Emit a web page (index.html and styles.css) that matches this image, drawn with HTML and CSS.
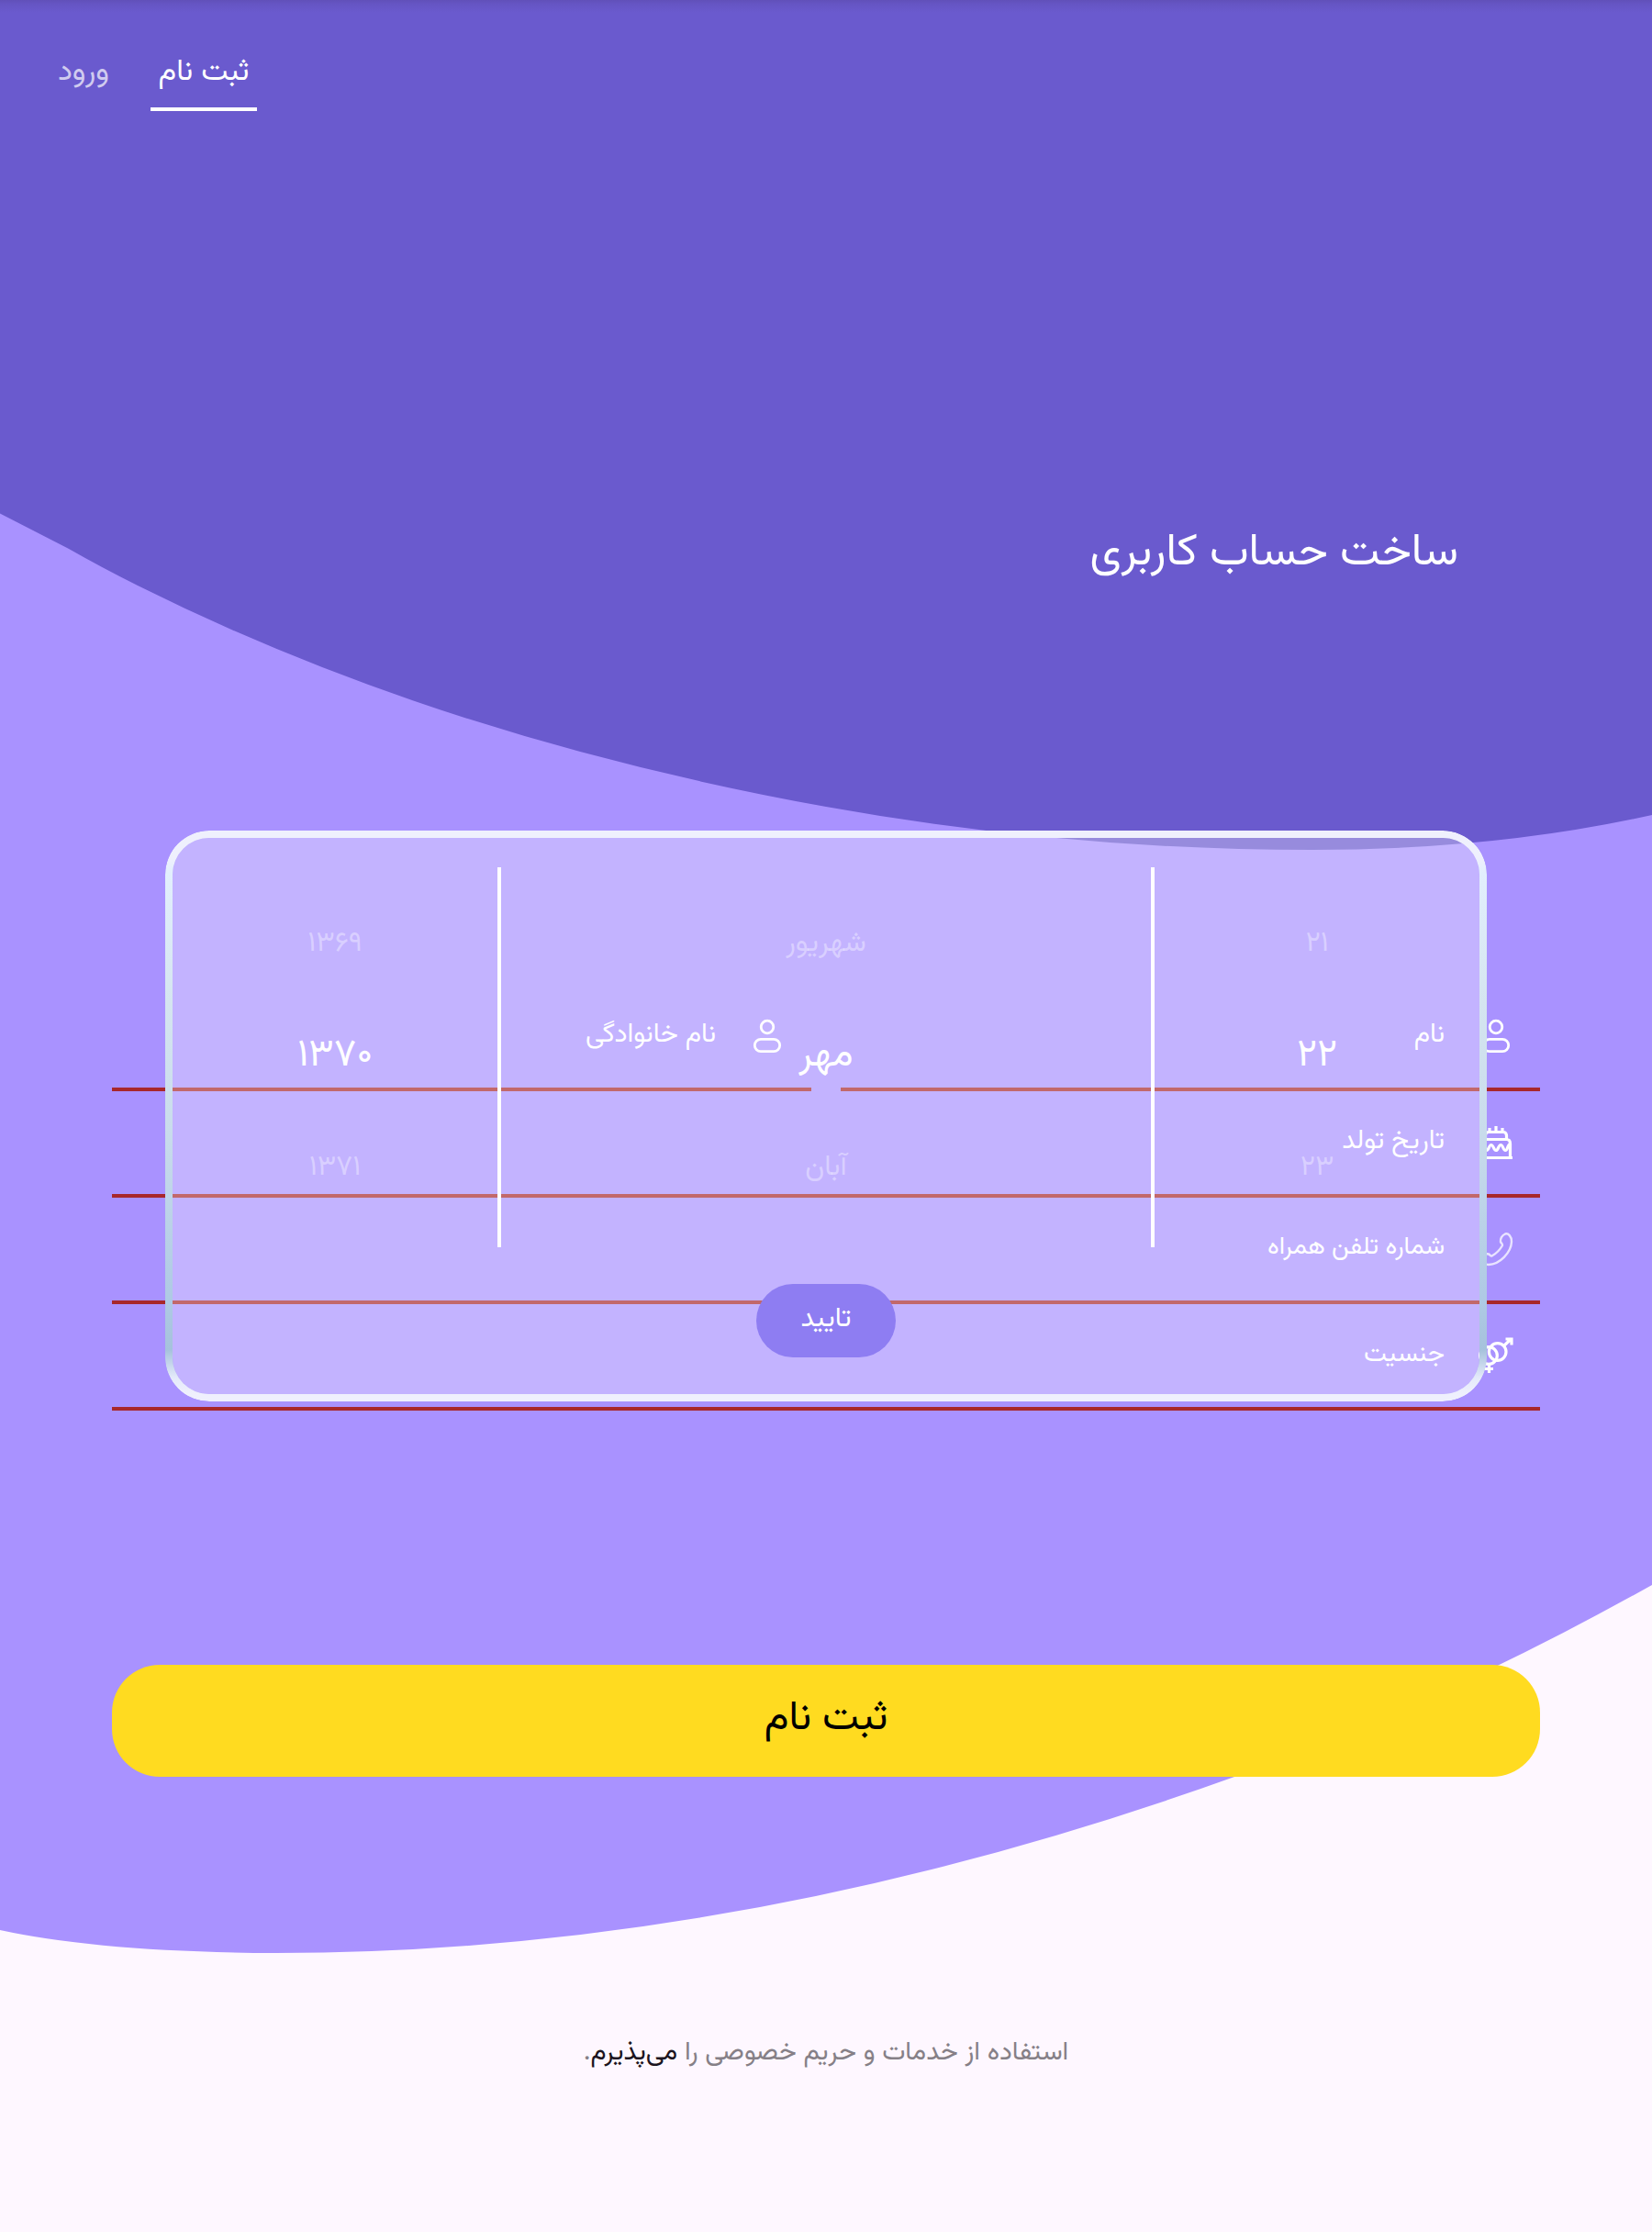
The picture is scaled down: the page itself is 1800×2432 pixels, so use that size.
FILE: index.html
```html
<!DOCTYPE html>
<html lang="fa" dir="rtl">
<head>
<meta charset="utf-8">
<title>ثبت نام</title>
<link rel="stylesheet" href="styles.css">
</head>
<body>
<svg class="waves" viewBox="0 0 1800 2432" aria-hidden="true">
  <path fill="#a992ff" d="M0 0H1800V1727Q1574 1853.600 1345 1936Q812 2128 300 2128Q110 2127 0 2103Z"/>
  <path fill="#6a5ace" d="M0 0H1800V888Q1630 926 1430 926Q1161 926 900 879Q481 803.500 150 638Q110 618 75 598L0 559.500Z"/>
</svg>
<svg width="0" height="0" class="defs" aria-hidden="true">
  <symbol id="person" viewBox="0 0 40 40">
    <circle cx="20" cy="10" r="6.800"/><rect x="6.300" y="23.300" width="27.400" height="13.400" rx="6.700"/>
  </symbol>
  <symbol id="cake" viewBox="0 0 40 40">
    <path d="M2 36.500H38M5 36V20Q5 16.500 8.500 16.500H31.500Q35.500 16.500 35.500 21V36M8.500 16V12Q8.500 8.500 12 8.500H28Q31 8.500 31.500 12V16M13 8V4M20 8V2M27 8V4"/>
    <path d="M5 21.500C7 21.500 7 28.500 9.700 28.500S12.300 22.500 14.800 22.500S17.400 28.500 20 28.500S22.600 22.500 25.200 22.500S27.700 28.500 30.300 28.500S32.500 21.500 35.500 21.500"/>
  </symbol>
  <symbol id="phone" viewBox="0 0 40 40">
    <path d="M30 3.500C33.500 2.500 37 6 37 12C36.500 24 24 36.500 12 37C6 37 2.500 33.500 3.500 30C5 26.500 9 24.500 12 25.500C13.500 26 14 28 15.500 27.500C20 25 24.500 20.500 27 16C27.500 14.500 25.500 13.500 25 12C24.500 9 26.500 5 30 3.500Z"/>
  </symbol>
  <symbol id="gender" viewBox="0 0 40 40">
    <circle cx="21.700" cy="16" r="9.300"/><circle cx="12" cy="20" r="9.300"/>
    <path d="M28.500 9.500L37 1.500M30.500 2H37V8.500M12.500 29V39M8 34.500H17"/>
  </symbol>
</svg>

<header class="tabs">
  <a class="tab active">ثبت نام</a>
  <a class="tab">ورود</a>
</header>

<h1 class="title">ساخت حساب کاربری</h1>

<form class="form">
  <div class="names">
    <label class="field"><svg class="icon"><use href="#person"/></svg>نام</label>
    <label class="field"><svg class="icon"><use href="#person"/></svg>نام خانوادگی</label>
  </div>
  <label class="field"><svg class="icon heavy"><use href="#cake"/></svg>تاریخ تولد</label>
  <label class="field phone"><svg class="icon faint"><use href="#phone"/></svg>شماره تلفن همراه</label>
  <label class="field gender"><svg class="icon heavy"><use href="#gender"/></svg>جنسیت</label>
  <button type="button" class="submit">ثبت نام</button>
</form>

<p class="terms">استفاده از خدمات و حریم خصوصی را <b>می‌پذیرم</b>.</p>

<section class="picker">
  <div class="wheels">
    <div class="wheel"><span>۲۱</span><span class="selected">۲۲</span><span>۲۳</span></div>
    <div class="wheel month"><span>شهریور</span><span class="selected">مهر</span><span>آبان</span></div>
    <div class="wheel"><span>۱۳۶۹</span><span class="selected">۱۳۷۰</span><span>۱۳۷۱</span></div>
  </div>
  <button type="button" class="confirm">تایید</button>
</section>
</body>
</html>
```
FILE: styles.css
```css
* { box-sizing: border-box; }

body {
  margin: 0;
  position: relative;
  height: 2432px;
  overflow: hidden;
  display: flex;
  flex-direction: column;
  background: #fef7ff;
  color: #fff;
  font-family: Vazirmatn, "Noto Sans Arabic", "DejaVu Sans", sans-serif;
}

body::before {
  content: "";
  position: absolute;
  inset: 0 0 auto;
  height: 14px;
  background: linear-gradient(rgba(60, 40, 100, .2), rgba(60, 40, 100, .1) 30%, transparent);
}

.waves {
  position: absolute;
  inset: 0;
  width: 1800px;
  height: 2432px;
  z-index: -1;
}

.defs { position: absolute; }

.tabs {
  display: flex;
  justify-content: flex-end;
  gap: 36px;
  height: 121px;
  padding: 54px 0 0 54px;
}

.tab {
  width: 74px;
  height: 67px;
  text-align: center;
  font-size: 33px;
  line-height: 50px;
  white-space: nowrap;
  color: rgba(255, 255, 255, .7);
}

.tab.active {
  width: 116px;
  color: #fff;
  border-bottom: 4px solid #fff;
}

.title {
  margin: 444px 211px 0 0;
  font-size: 48.700px;
  font-weight: 400;
  line-height: 76px;
}

.form {
  margin: 432px 122px 0;
  display: flex;
  flex-direction: column;
}

.names {
  display: grid;
  grid-template-columns: 1fr 1fr;
  gap: 32px;
}

.field {
  display: flex;
  align-items: center;
  gap: 36px;
  height: 116px;
  padding-right: 28px;
  border-bottom: 4px solid #a8272b;
  font-size: 29.200px;
  line-height: 42px;
}

.field.phone { font-size: 27.400px; }
.field.gender { font-size: 28px; }

.icon {
  width: 40px;
  height: 40px;
  margin-top: 2px;
  fill: none;
  stroke: #fff;
  stroke-width: 2.800;
  overflow: visible;
}

.field { padding-bottom: 2px; }

.icon.heavy { stroke-width: 3.200; }

.icon.faint {
  stroke-width: 2.400;
  opacity: .75;
}

button {
  border: 0;
  font-family: inherit;
}

.submit {
  height: 122px;
  margin-top: 277px;
  padding: 0 0 4px;
  border-radius: 52px;
  background: #ffdb20;
  color: #000;
  font-size: 45px;
}

.terms {
  margin: 279px 0 0;
  text-align: center;
  font-size: 28.750px;
  line-height: 44px;
  color: #868087;
}

.terms b {
  font-weight: 400;
  color: #1c1420;
}

.picker {
  position: absolute;
  isolation: isolate;
  top: 905px;
  left: 180px;
  width: 1440px;
  height: 622px;
  padding: 40px 8px 48px;
  display: flex;
  flex-direction: column;
  align-items: center;
  justify-content: space-between;
  border-radius: 48px;
}

.picker::before,
.picker::after {
  content: "";
  position: absolute;
  z-index: -1;
}

.picker::before {
  inset: 8px;
  border-radius: 40px;
  background: rgba(255, 255, 255, .3);
}

.picker::after {
  inset: 0;
  padding: 8px;
  border-radius: 48px;
  background: linear-gradient(#eff0fd 30px, #e2effd 46px, #d5e5f0 185px, #c9dcec 325px, #aec9e4 515px, #a6c2dc 566px, #e4eafa 596px, #eff0fd 614px);
  mask: linear-gradient(#000 0 0) content-box exclude, linear-gradient(#000 0 0);
}

.wheels {
  display: flex;
  width: 100%;
  height: 414px;
}

.wheel {
  flex: 1;
  display: flex;
  flex-direction: column;
  align-items: center;
  justify-content: center;
  padding-bottom: 3px;
  font-size: 31px;
  color: rgba(255, 255, 255, .38);
}

.wheel.month {
  flex: 0 0 716px;
  border: solid #fff;
  border-width: 0 4px;
}

.wheel span {
  height: 122px;
  line-height: 122px;
}

.wheel .selected {
  color: #fff;
  font-size: 42px;
}

.confirm {
  width: 152px;
  height: 80px;
  padding: 0 0 4px;
  border-radius: 40px;
  background: #8e7df2;
  color: #fff;
  font-size: 30px;
}
```
